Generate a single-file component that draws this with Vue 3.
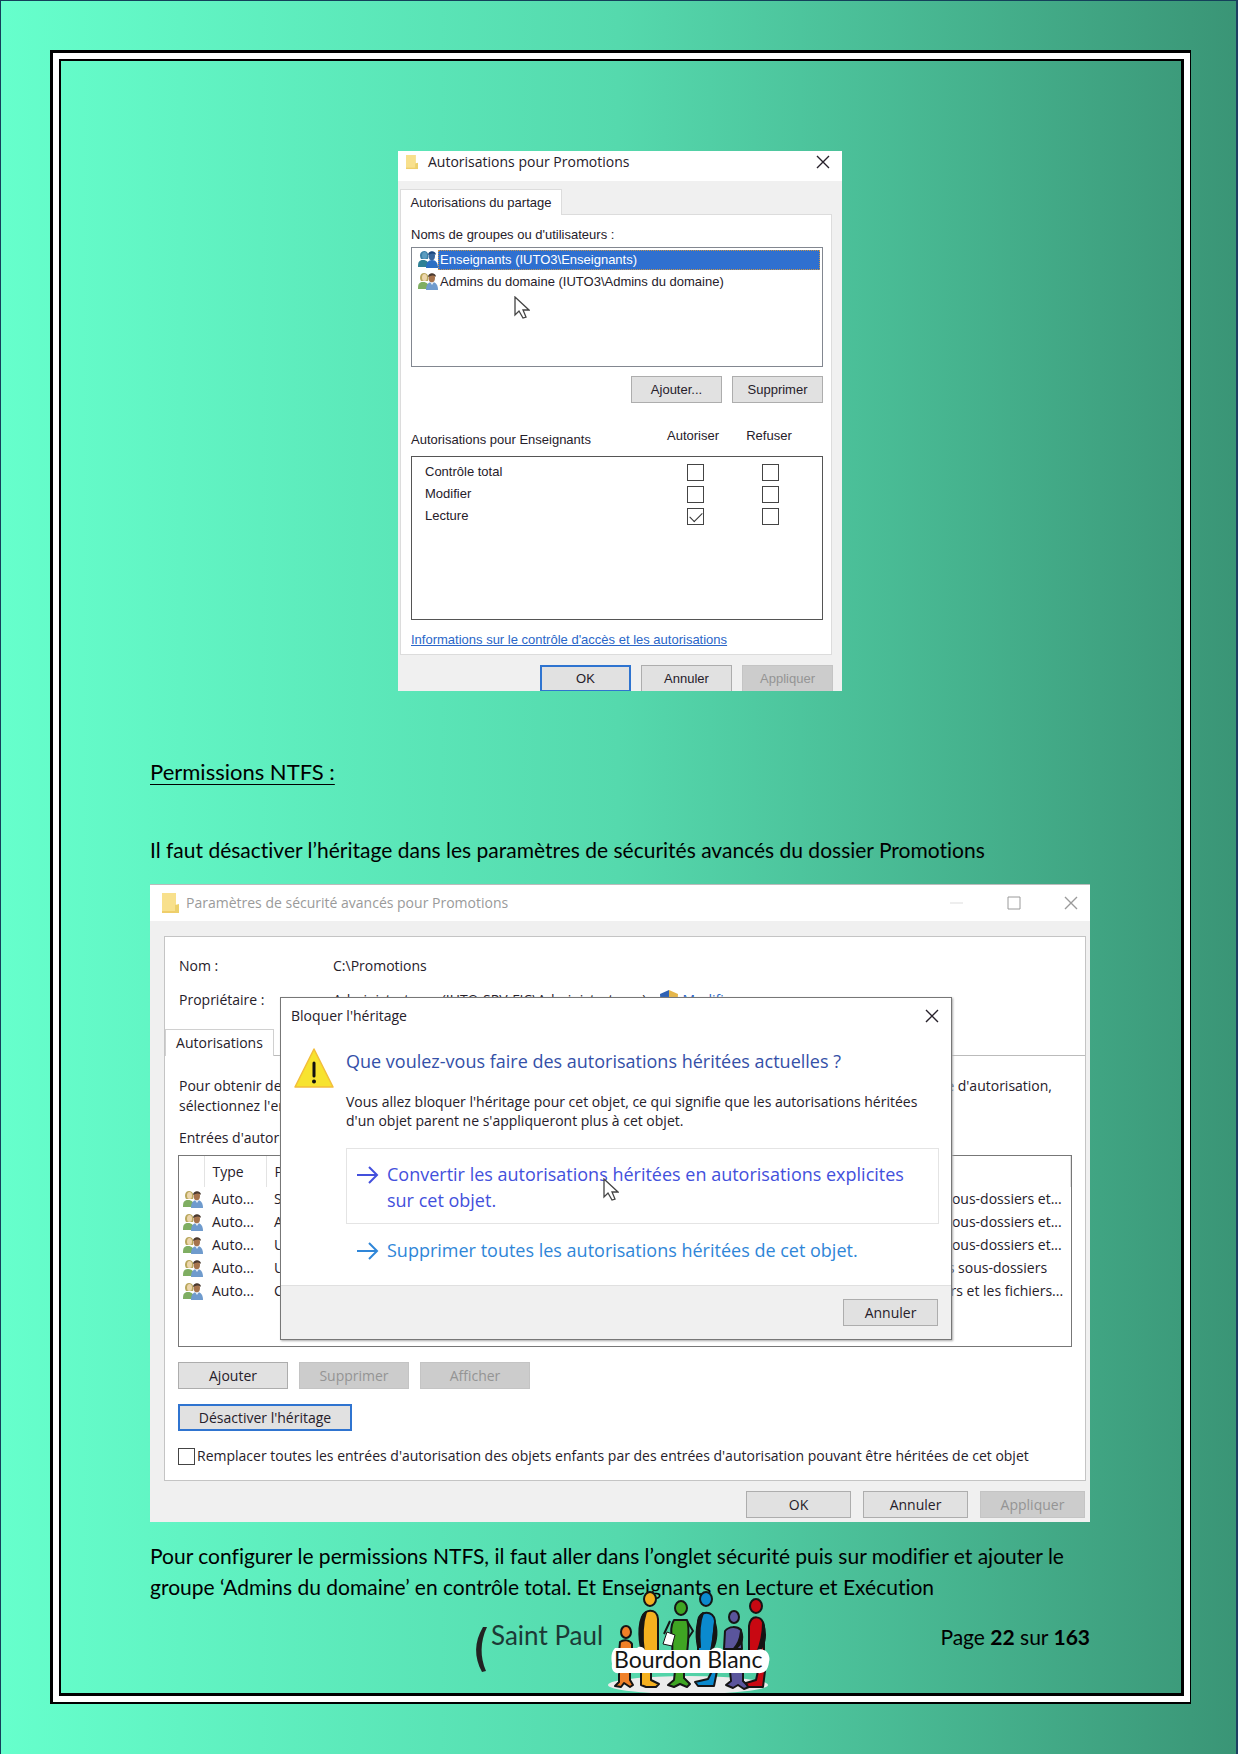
<script setup>
import { ref } from 'vue'

const users = ['Enseignants (IUTO3\\Enseignants)', 'Admins du domaine (IUTO3\\Admins du domaine)']
const rights = ref([
  { name: 'Contrôle total', allow: false, deny: false },
  { name: 'Modifier', allow: false, deny: false },
  { name: 'Lecture', allow: true, deny: false },
])
const entries = [
  { who: 'Système', scope: 'Ce dossier, les sous-dossiers et...' },
  { who: 'Administrateurs', scope: 'Ce dossier, les sous-dossiers et...' },
  { who: 'Utilisateurs', scope: 'Ce dossier, les sous-dossiers et...' },
  { who: 'Utilisateurs', scope: 'Ce dossier et les sous-dossiers' },
  { who: 'CREATEUR', scope: 'Les sous-dossiers et les fichiers...' },
]
const replaceAll = ref(false)
</script>

<template>
  <div class="page">
    <svg class="defs" aria-hidden="true">
      <symbol id="people" viewBox="0 0 20 18">
        <path d="M0 17c0-5 1-7 5-7s6 2 6 7z" fill="#7fae62" />
        <path d="M3 9C1 6 2 1 6 1s5 4 4 8z" fill="#b9a75c" />
        <ellipse cx="6.500" cy="5.500" rx="2.500" ry="3.500" fill="#ecd6ac" />
        <path d="M8 18c0-5 2-8 6-8s6 3 6 8z" fill="#6f9bcd" />
        <path d="M12 10l2 3 2-3z" fill="#e8eef6" />
        <ellipse cx="13.800" cy="6" rx="3.200" ry="4.200" fill="#a5734c" />
        <path d="M10 5c0-5 8-5 8 0-2-2-5-2-8 0z" fill="#4a3a30" />
      </symbol>
      <symbol id="people-on" viewBox="0 0 20 18">
        <path d="M0 17c0-5 1-7 5-7s6 2 6 7z" fill="#2f8196" />
        <path d="M3 9C1 6 2 1 6 1s5 4 4 8z" fill="#3b7fa6" />
        <ellipse cx="6.500" cy="5.500" rx="2.500" ry="3.500" fill="#5b9cc0" />
        <path d="M8 18c0-5 2-8 6-8s6 3 6 8z" fill="#2b6fc4" />
        <ellipse cx="13.800" cy="6" rx="3.200" ry="4.200" fill="#3a679b" />
        <path d="M10 5c0-5 8-5 8 0-2-2-5-2-8 0z" fill="#1d477c" />
      </symbol>
      <symbol id="close" viewBox="0 0 14 14">
        <path d="M1 1l12 12M13 1L1 13" fill="none" stroke="currentColor" stroke-width="1.400" />
      </symbol>
      <symbol id="folder" viewBox="0 0 17 20">
        <path d="M0 0h14v12h3v8H0z" fill="#f8e08c" />
        <path d="M0 18h17v2H0z" fill="#efce6a" />
        <path d="M13 12l4-1v9h-4z" fill="#ecd06c" />
      </symbol>
      <symbol id="cursor" viewBox="0 0 16 23">
        <path d="M1 1v18l4-4 4 7 3-1-3-7h6z" fill="#fff" stroke="#444" stroke-width="1.300" />
      </symbol>
      <symbol id="arrow" viewBox="0 0 22 18">
        <path d="M0 9h20M12 1l8 8-8 8" fill="none" stroke="currentColor" stroke-width="2" />
      </symbol>
    </svg>

    <div class="frame"><div class="frame-mid"><main class="sheet">
      <section class="win share">
        <header class="titlebar">
          <svg class="folder"><use href="#folder" /></svg>
          <h2>Autorisations pour Promotions</h2>
          <button class="ico" aria-label="Fermer"><svg><use href="#close" /></svg></button>
        </header>
        <button class="tab">Autorisations du partage</button>
        <div class="panel">
          <p class="label">Noms de groupes ou d'utilisateurs :</p>
          <div class="list">
            <ul>
              <li v-for="(u, i) in users" :key="u" :class="{ on: i === 0 }">
                <svg class="people"><use :href="i === 0 ? '#people-on' : '#people'" /></svg>
                <span>{{ u }}</span>
              </li>
            </ul>
            <svg class="cursor"><use href="#cursor" /></svg>
          </div>
          <div class="row end">
            <button class="btn">Ajouter...</button>
            <button class="btn">Supprimer</button>
          </div>
          <div class="heads">
            <span>Autorisations pour Enseignants</span>
            <b>Autoriser</b>
            <b>Refuser</b>
          </div>
          <div class="rights">
            <div v-for="r in rights" :key="r.name" class="right">
              <span>{{ r.name }}</span>
              <label><input v-model="r.allow" type="checkbox" :aria-label="r.name + ' : autoriser'"></label>
              <label><input v-model="r.deny" type="checkbox" :aria-label="r.name + ' : refuser'"></label>
            </div>
          </div>
          <a class="info" href="#">Informations sur le contrôle d'accès et les autorisations</a>
        </div>
        <footer class="row end foot">
          <button class="btn primary">OK</button>
          <button class="btn">Annuler</button>
          <button class="btn" disabled>Appliquer</button>
        </footer>
      </section>

      <h1>Permissions NTFS :</h1>
      <p class="text intro">Il faut désactiver l’héritage dans les paramètres de sécurités avancés du dossier Promotions</p>

      <section class="win security">
        <header class="titlebar">
          <svg class="folder"><use href="#folder" /></svg>
          <h2>Paramètres de sécurité avancés pour Promotions</h2>
          <button class="ico min" aria-label="Réduire"><svg viewBox="0 0 14 14"><path d="M0 7h13" stroke="currentColor" /></svg></button>
          <button class="ico max" aria-label="Agrandir"><svg viewBox="0 0 14 14"><path d="M1 1h12v12H1z" fill="none" stroke="currentColor" /></svg></button>
          <button class="ico" aria-label="Fermer"><svg><use href="#close" /></svg></button>
        </header>
        <div class="panel">
          <dl>
            <dt>Nom :</dt><dd>C:\Promotions</dd>
            <dt>Propriétaire :</dt>
            <dd class="owner">
              <span>Administrateurs (IUTO-SRV-FIC\Administrateurs)</span>
              <svg class="shield" viewBox="0 0 18 20"><path d="M9 0l9 4c0 8-3 13-9 16z" fill="#e5b64a" /><path d="M9 0L0 4c0 8 3 13 9 16z" fill="#2f62b5" /></svg>
              <a href="#">Modifier</a>
            </dd>
          </dl>
          <div class="tabs"><button class="tab">Autorisations</button></div>
          <div class="inside">
            <div class="hint"><span>Pour obtenir des informations<br>sélectionnez l'entrée</span><span>entrée d'autorisation,</span></div>
            <p class="label">Entrées d'autorisations :</p>
            <div class="grid">
              <table>
                <thead><tr><th class="c-ico"></th><th class="c-type">Type</th><th>Principal</th><th class="c-scope"></th></tr></thead>
                <tbody>
                  <tr v-for="(e, i) in entries" :key="i">
                    <td class="c-ico"><svg class="people"><use href="#people" /></svg></td>
                    <td>Auto...</td><td>{{ e.who }}</td><td>{{ e.scope }}</td>
                  </tr>
                </tbody>
              </table>
            </div>
            <div class="row">
              <button class="btn">Ajouter</button>
              <button class="btn" disabled>Supprimer</button>
              <button class="btn" disabled>Afficher</button>
            </div>
            <button class="btn primary inherit">Désactiver l'héritage</button>
            <label class="replace"><input v-model="replaceAll" type="checkbox">Remplacer toutes les entrées d'autorisation des objets enfants par des entrées d'autorisation pouvant être héritées de cet objet</label>
          </div>
        </div>
        <footer class="row end foot">
          <button class="btn">OK</button>
          <button class="btn">Annuler</button>
          <button class="btn" disabled>Appliquer</button>
        </footer>

        <div class="modal" role="dialog" aria-label="Bloquer l'héritage">
          <header><span>Bloquer l'héritage</span><button class="ico" aria-label="Fermer"><svg><use href="#close" /></svg></button></header>
          <div class="body">
            <svg class="warn" viewBox="0 0 40 40"><path d="M20 1l19 38H1z" fill="#f7e32f" stroke="#f3bd3c" stroke-width="1.500" stroke-linejoin="round" /><path d="M20 15v13" stroke="#111" stroke-width="3" stroke-linecap="round" /><circle cx="20" cy="33.500" r="2" fill="#111" /></svg>
            <div class="ask">
              <h3>Que voulez-vous faire des autorisations héritées actuelles ?</h3>
              <p>Vous allez bloquer l'héritage pour cet objet, ce qui signifie que les autorisations héritées d'un objet parent ne s'appliqueront plus à cet objet.</p>
              <button class="cmd hot"><svg><use href="#arrow" /></svg><span>Convertir les autorisations héritées en autorisations explicites sur cet objet.</span></button>
              <button class="cmd"><svg><use href="#arrow" /></svg><span>Supprimer toutes les autorisations héritées de cet objet.</span></button>
            </div>
          </div>
          <footer><button class="btn">Annuler</button></footer>
          <svg class="cursor"><use href="#cursor" /></svg>
        </div>
      </section>

      <p class="text outro">Pour configurer le permissions NTFS, il faut aller dans l’onglet sécurité puis sur modifier et ajouter le groupe ‘Admins du domaine’ en contrôle total. Et Enseignants en Lecture et Exécution</p>

      <footer class="pagefoot">
        <svg class="logo" viewBox="0 0 300 102" role="img" aria-label="Saint Paul Bourdon Blanc">
          <path d="M12 36C3 51 3 66 11 81l4-1C9 66 9 51 16 36z" fill="#222" />
          <text x="20" y="54" font-size="26" fill="#1c3a36">Saint Paul</text>
          <ellipse cx="217" cy="94" rx="80" ry="9" fill="#ececec" />
          <g stroke="#151515" stroke-width="2" stroke-linejoin="round">
            <path d="M148 80v11l-4 4 6 1 3-4 6 4 3-2-3-5V80z" fill="#f08028" />
            <path d="M170 80v14l5 2h10l3-3-8-4V80z" fill="#f4b01f" />
            <path d="M204 80l-1 9-6 5 6 2 6-3 7 3 3-3-6-6v-7z" fill="#3fa523" />
            <path d="M241 80l-4 8-13 3 3 4h16l3-15z" fill="#0b8ace" />
            <path d="M259 80l1 10-5 4 7 3 5-3 6 4 5-2-6-6V80z" fill="#5a559c" />
            <path d="M287 80l-2 9-10 3 2 4h15l2-16z" fill="#c80812" />
            <ellipse cx="155" cy="41" rx="5" ry="6" fill="#f08028" />
            <path d="M148 62l1-11c4-3 10-2 12 2v9z" fill="#f08028" />
            <ellipse cx="179" cy="8" rx="6" ry="7" fill="#f4b01f" />
            <path d="M171 62V28c1-10 15-12 16 0v34z" fill="#f4b01f" />
            <path d="M171 62c-4-16-4-36 4-41-4 12-4 26-2 41z" fill="#151515" />
            <ellipse cx="210" cy="17" rx="6" ry="7" fill="#3fa523" />
            <path d="M216 30l6 10-6 9M199 30l-6 13" fill="none" />
            <path d="M201 62c2-12-4-24 2-33h13c3 8 1 24 0 33z" fill="#3fa523" />
            <path d="M196 41l8 3-3 11-9-2z" fill="#fff" stroke-width="1" />
            <ellipse cx="235" cy="8" rx="6" ry="7" fill="#0b8ace" />
            <path d="M227 60V30c1-11 16-11 17 0l-3 30z" fill="#0b8ace" />
            <path d="M227 56c-3-14-1-29 5-34-4 10-4 22-3 34zM244 32c3 10 1 22-4 28 2-10 3-18 4-28z" fill="#151515" />
            <ellipse cx="263" cy="26" rx="5" ry="6" fill="#5a559c" />
            <path d="M253 58l1-18c4-5 12-5 16-1l1 19z" fill="#5a559c" />
            <path d="M270 40c3 8 1 14-8 19 5-6 7-10 8-19z" fill="#151515" />
            <ellipse cx="285" cy="15" rx="6" ry="7" fill="#c80812" />
            <path d="M278 62V35c2-12 13-11 15 0v27z" fill="#c80812" />
            <path d="M292 32c4 12 2 24-6 30 4-10 6-18 6-30z" fill="#151515" />
          </g>
          <path d="M144 57h22c2-2 6-2 8 2h66c2-3 10-3 12 0h34c9-3 14 5 12 12-1 8-4 12-12 11H149c-6 1-9-3-8-9-1-6-1-12 3-16z" fill="#fff" />
          <text x="143" y="77" font-size="23" fill="#151515">Bourdon Blanc</text>
        </svg>
        <p>Page <strong>22</strong> sur <strong>163</strong></p>
      </footer>
    </main></div></div>
  </div>
</template>

<style>
body { margin: 0; background: #fff; }
</style>

<style scoped>
* { box-sizing: border-box; }
h1, h2, h3, p, ul, dl, dd { margin: 0; padding: 0; font-weight: 400; }
button { font: inherit; color: inherit; padding: 0; border: 0; background: none; }
.defs { position: absolute; width: 0; height: 0; }
.page {
  min-height: 100vh;
  margin-right: 3px;
  padding: 49px 45px 49px 49px;
  border: 1px solid #14405a;
  border-right: 2px solid #1d3f62;
  border-bottom: 0;
  background: linear-gradient(90deg, #66ffcc 0%, #55d9ad 50%, #3a9576 100%);
  color: #000;
  font-family: Lato, "Open Sans", sans-serif;
  font-variant-ligatures: none;
}
.frame { border: solid #000; border-width: 3px 1px 2px 3px; }
.frame-mid { border: 6px solid #fff; }
.sheet { border: solid #000; border-width: 2px 3px 3px 2px; padding: 90px 91px 0 89px; min-height: 1637px; }

.win { background: #f0f0f0; color: #26202a; }
.titlebar { display: flex; align-items: center; background: #fff; }
.titlebar h2 { flex: 1; font-size: 14px; }
.ico { display: flex; }
.ico svg { width: 14px; height: 14px; }
.row { display: flex; gap: 10px; }
.end { justify-content: flex-end; }
.btn { height: 27px; background: #e1e1e1; border: 1px solid #adadad; }
.btn:disabled { background: #cccccc; border-color: #c4c4c4; color: #949494; }
.primary { border: 2px solid #2f74d0; }
input[type='checkbox'] { appearance: none; flex: none; display: block; position: relative; width: 17px; height: 17px; margin: 0; border: 1px solid #444; background: #fff; }
input[type='checkbox']:checked::after { content: ''; position: absolute; left: 2px; top: 3px; width: 11px; height: 6px; border: solid #333; border-width: 0 0 1px 1px; transform: rotate(-45deg); }
.people { width: 20px; height: 18px; }
.cursor { position: absolute; width: 16px; height: 23px; }

.share { width: 444px; height: 540px; margin: 0 auto; overflow: hidden; font: 13px/20px "Liberation Sans", Arial, sans-serif; }
.share .titlebar { height: 30px; padding: 0 12px 8px 8px; font-family: "Open Sans", sans-serif; }
.share .folder { width: 12px; height: 16px; margin-right: 10px; }
.share .tab { display: block; position: relative; margin: 8px 0 0 2px; width: 162px; height: 26px; background: #fff; border: 1px solid #dcdcdc; border-bottom: 0; }
.share .panel { margin: -1px 10px 0 2px; height: 441px; padding: 10px 8px 0 10px; background: #fff; border: 1px solid #dcdcdc; }
.list { position: relative; height: 120px; margin-top: 2px; border: 1px solid #828790; padding: 2px 2px 0 6px; }
.list ul { list-style: none; }
.list li { display: flex; height: 20px; margin-bottom: 2px; line-height: 20px; }
.list li span { flex: 1; padding-left: 2px; }
.list .on span { background: #2f70d0; color: #fff; outline: 1px dotted #c8954a; outline-offset: -1px; }
.list .cursor { left: 102px; top: 48px; }
.share .row { margin-top: 9px; }
.share .btn { width: 91px; }
.heads { display: flex; align-items: flex-start; margin-top: 23px; padding-right: 16px; height: 30px; }
.heads span { flex: 1; padding-top: 4px; }
.heads b { font-weight: 400; width: 76px; text-align: center; }
.rights { height: 164px; border: 1px solid #555; padding: 4px 25px 0 13px; }
.right { display: flex; align-items: center; height: 22px; }
.right span { flex: 1; }
.right label { width: 75px; padding-left: 40px; }
.info { display: block; margin-top: 10px; color: #2a66c8; }
.share .foot { margin: 10px 9px 0 0; }

h1 { margin-top: 65px; font-size: 22px; line-height: 32px; text-decoration: underline; text-underline-offset: 4px; text-decoration-thickness: 1px; }
.text { font-size: 21px; line-height: 31px; }
.intro { margin-top: 46px; }
.outro { margin-top: 18px; }

.security { position: relative; margin-top: 19px; border-top: 1px solid #bbb; height: 638px; font: 14px/20px "Open Sans", sans-serif; }
.security .titlebar { height: 36px; padding: 0 12px; color: #9a9a9a; }
.security .folder { width: 17px; height: 20px; margin-right: 7px; }
.security .titlebar .min { color: #ddd; }
.security .titlebar .ico + .ico { margin-left: 43px; }
.security .panel { margin: 15px 4px 0 14px; background: #fff; border: 1px solid #c4c4c4; height: 545px; }
dl { display: grid; grid-template-columns: 154px 1fr; grid-auto-rows: 34px; padding: 19px 0 0 14px; height: 92px; }
.owner { display: flex; align-items: flex-start; }
.owner a { color: #2a66c8; text-decoration: none; }
.shield { width: 18px; height: 20px; margin: 0 4px 0 14px; }
.tabs { height: 27px; border-bottom: 1px solid #bbb; }
.tabs .tab { width: 109px; height: 27px; background: #fff; border: 1px solid #d0d0d0; border-bottom: 0; }
.inside { padding: 20px 13px 0 13px; }
.hint { display: flex; justify-content: space-between; padding: 0 20px 0 1px; }
.inside .label { margin: 12px 0 7px 1px; }
.grid { height: 192px; border: 1px solid #777; }
table { border-collapse: collapse; table-layout: fixed; width: 100%; }
th { text-align: left; font-weight: 400; height: 31px; padding: 0 0 0 8px; border-right: 1px solid #e3e3e3; }
td { height: 23px; padding: 0 0 0 8px; white-space: nowrap; }
.c-ico { width: 25px; padding: 0 0 0 4px; }
td.c-ico svg { display: block; }
.c-type { width: 62px; }
.c-scope { width: 230px; }
.inside .row { margin-top: 15px; gap: 11px; }
.inside .row .btn { width: 110px; }
.security .foot { margin: 10px 5px 0 0; gap: 12px; }
.security .foot .btn { width: 105px; }
.inherit { display: block; width: 174px; margin-top: 15px; }
.replace { display: flex; align-items: center; gap: 2px; margin-top: 15px; white-space: nowrap; }

.modal { position: absolute; left: 130px; right: 138px; top: 112px; height: 343px; display: flex; flex-direction: column; background: #fff; border: 1px solid #777; box-shadow: 1px 1px 2px #aaa; }
.modal header { display: flex; justify-content: space-between; align-items: center; height: 36px; padding: 0 12px 0 10px; }
.body { flex: 1; display: flex; }
.warn { width: 40px; height: 40px; margin: 14px 12px 0 13px; }
.ask { flex: 1; padding: 12px 12px 0 0; }
h3 { font-size: 18px; line-height: 30px; color: #3450a8; }
.ask p { margin-top: 16px; line-height: 19px; }
.cmd { display: flex; width: 100%; padding: 12px 10px 10px; border: 1px solid transparent; text-align: left; font-size: 18px; line-height: 26px; color: #2f86d8; }
.cmd svg { flex: none; width: 22px; height: 18px; margin: 5px 8px 0 0; }
.hot { margin-top: 18px; border-color: #e4e4e4; color: #4350dc; }
.modal footer { height: 54px; padding: 13px 13px 0 0; background: #f0f0f0; border-top: 1px solid #e0e0e0; text-align: right; }
.modal footer .btn { width: 95px; }
.modal .cursor { left: 322px; top: 180px; }

.pagefoot { position: relative; display: flex; justify-content: flex-end; padding-top: 20px; font-size: 21px; line-height: 30px; }
.logo { position: absolute; left: 321px; top: -11px; width: 300px; height: 102px; font-family: Lato, sans-serif; }
</style>
